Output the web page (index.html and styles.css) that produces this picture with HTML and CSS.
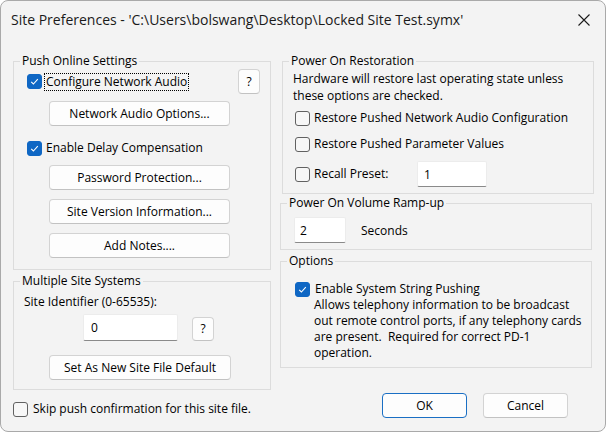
FILE: index.html
```html
<!DOCTYPE html>
<html lang="en">
<head>
    <meta charset="UTF-8">
    <meta name="viewport" content="width=device-width, initial-scale=1.0">
    <title>Site Preferences</title>
    <link rel="stylesheet" href="styles.css">
</head>
<body>

<div class="window">
    <div class="titlebar">
        <span class="title">Site Preferences - 'C:\Users\bolswang\Desktop\Locked Site Test.symx'</span>
        <svg class="close" width="12" height="12" viewBox="0 0 12 12">
            <path d="M0.5 0.5 L11.5 11.5 M11.5 0.5 L0.5 11.5" stroke="#1b1b1b" stroke-width="1.1" fill="none"/>
        </svg>
    </div>

    <div class="content">
        <div class="col left">
            <fieldset class="group push">
                <legend>Push Online Settings</legend>
                <div class="body">
                    <div class="row first">
                        <label class="check">
                            <span class="box checked"><svg width="13" height="13" viewBox="0 0 13 13"><path d="M3.2 6.8 L5.4 9 L9.8 4.2" stroke="#fff" stroke-width="1.1" fill="none"/></svg></span>
                            <span class="focused">Configure Network Audio</span>
                        </label>
                        <button class="btn help">?</button>
                    </div>
                    <button class="btn wide net-opts">Network Audio Options...</button>
                    <label class="check delay">
                        <span class="box checked"><svg width="13" height="13" viewBox="0 0 13 13"><path d="M3.2 6.8 L5.4 9 L9.8 4.2" stroke="#fff" stroke-width="1.1" fill="none"/></svg></span>
                        <span>Enable Delay Compensation</span>
                    </label>
                    <button class="btn wide pw">Password Protection...</button>
                    <button class="btn wide stacked">Site Version Information...</button>
                    <button class="btn wide stacked">Add Notes....</button>
                </div>
            </fieldset>

            <fieldset class="group multi">
                <legend>Multiple Site Systems</legend>
                <div class="body">
                    <div class="field-label">Site Identifier (0-65535):</div>
                    <div class="id-row">
                        <input class="text site-id" type="text" value="0">
                        <button class="btn help small">?</button>
                    </div>
                    <button class="btn set-default">Set As New Site File Default</button>
                </div>
            </fieldset>

            <label class="check skip">
                <span class="box"></span>
                <span>Skip push confirmation for this site file.</span>
            </label>
        </div>

        <div class="col right">
            <fieldset class="group restore">
                <legend>Power On Restoration</legend>
                <div class="body">
                    <p class="note">Hardware will restore last operating state unless<br>these options are checked.</p>
                    <label class="check r1"><span class="box"></span><span>Restore Pushed Network Audio Configuration</span></label>
                    <label class="check r2"><span class="box"></span><span>Restore Pushed Parameter Values</span></label>
                    <div class="preset-row">
                        <label class="check preset"><span class="box"></span><span>Recall Preset:</span></label>
                        <input class="text preset-num" type="text" value="1">
                    </div>
                </div>
            </fieldset>

            <fieldset class="group ramp">
                <legend>Power On Volume Ramp-up</legend>
                <div class="body">
                    <input class="text ramp-num" type="text" value="2">
                    <span class="unit">Seconds</span>
                </div>
            </fieldset>

            <fieldset class="group options">
                <legend>Options</legend>
                <div class="body">
                    <label class="check"><span class="box checked"><svg width="13" height="13" viewBox="0 0 13 13"><path d="M3.2 6.8 L5.4 9 L9.8 4.2" stroke="#fff" stroke-width="1.1" fill="none"/></svg></span><span>Enable System String Pushing</span></label>
                    <p class="desc">Allows telephony information to be broadcast<br>out remote control ports, if any telephony cards<br>are present.&nbsp; Required for correct PD-1<br>operation.</p>
                </div>
            </fieldset>

            <div class="actions">
                <button class="btn action default">OK</button>
                <button class="btn action">Cancel</button>
            </div>
        </div>
    </div>
</div>

</body>
</html>
```

FILE: styles.css
```css
body {
    margin: 0;
    background-color: #fff;
    font-family: "Segoe UI", "Open Sans", sans-serif;
    font-size: 12px;
    color: #000;
}
.window {
    box-sizing: border-box;
    width: 606px;
    height: 432px;
    border: 1px solid #a9a9a9;
    border-radius: 8px;
    background-color: #f3f3f3;
    overflow: hidden;
}
.titlebar {
    height: 40px;
    box-sizing: border-box;
    display: flex;
    align-items: center;
    justify-content: space-between;
    padding: 0 15px 3px 10px;
}
.title {
    font-size: 14px;
    color: #1a1a1a;
}
.content {
    display: flex;
    gap: 9px;
    padding: 12px 0 0 12px;
}
.col {
    display: flex;
    flex-direction: column;
}
.left {
    width: 258px;
}
.right {
    width: 314px;
}

/* group boxes */
.group {
    margin: 0;
    padding: 0;
    min-width: 0;
    border: 1px solid #dcdcdc;
}
.group legend {
    margin-left: 6px;
    padding: 0 2px;
    line-height: 16px;
}
.group .body {
    display: flex;
    flex-direction: column;
    align-items: flex-start;
}

/* buttons */
.btn {
    box-sizing: border-box;
    font: inherit;
    color: #000;
    background-color: #fdfdfd;
    border: 1px solid #d3d3d3;
    border-bottom-color: #c2c2c2;
    border-radius: 4px;
    padding: 0;
    height: 25px;
    line-height: 22px;
    text-align: center;
}
.btn.wide {
    width: 181px;
    margin-left: 22px;
}
.btn.help {
    width: 22px;
}
.btn.help.small {
    height: 24px;
    width: 22px;
    margin-left: 14px;
}
.btn.default {
    border-color: #1a6fc4;
}

/* checkboxes */
.check {
    display: flex;
    align-items: center;
    gap: 4px;
    height: 16px;
    line-height: 16px;
    white-space: nowrap;
}
.box {
    box-sizing: border-box;
    width: 15px;
    height: 15px;
    flex: none;
    border: 1px solid #616161;
    border-radius: 3px;
    background-color: #f7f7f7;
    display: flex;
    align-items: center;
    justify-content: center;
}
.box.checked {
    background-color: #0f67c4;
    border-color: #0f67c4;
}
.focused {
    outline: 1px dotted #000;
    padding: 0 1px;
    margin-left: -1px;
}

/* text fields */
.text {
    box-sizing: border-box;
    font: inherit;
    color: #000;
    background-color: #fff;
    border: 1px solid #ececec;
    border-bottom-color: #8a8a8a;
    border-radius: 2px;
    padding: 0 6px;
    outline: none;
}

/* push online settings */
.push .body {
    padding: 0 10px 11px 13px;
}
.push .row {
    display: flex;
    align-items: center;
    align-self: stretch;
    justify-content: space-between;
    height: 25px;
}
.net-opts {
    margin-top: 7px;
}
.delay {
    margin-top: 14px;
}
.pw {
    margin-top: 9px;
}
.stacked {
    margin-top: 9px;
}

/* multiple site systems */
.multi {
    margin-top: 3px;
}
.multi .body {
    padding: 5px 0 9px 10px;
}
.field-label {
    line-height: 16px;
}
.id-row {
    display: flex;
    align-items: flex-end;
    margin-top: 4px;
    margin-left: 59px;
}
.site-id {
    width: 95px;
    height: 27px;
    padding-left: 7px;
}
.btn.set-default {
    width: 182px;
    margin-top: 14px;
    margin-left: 25px;
}
.skip {
    margin-top: 11px;
    gap: 5px;
}

/* power on restoration */
.restore {
    margin-left: 2px;
}
.restore .body {
    padding: 1px 0 6px 10px;
}
.note {
    margin: 0;
    line-height: 17px;
}
.r1 {
    margin-top: 6px;
    margin-left: 2px;
}
.r2 {
    margin-top: 10px;
    margin-left: 2px;
}
.preset-row {
    display: flex;
    align-items: center;
    margin-top: 9px;
    margin-left: 2px;
}
.preset {
    width: 122px;
}
.preset-num {
    width: 70px;
    height: 26px;
}

/* volume ramp */
.ramp {
    margin-top: 1px;
    margin-right: 2px;
}
.ramp .body {
    flex-direction: row;
    align-items: center;
    padding: 6px 0 6px 13px;
}
.ramp-num {
    width: 52px;
    height: 26px;
    padding-left: 5px;
}
.unit {
    margin-left: 15px;
}

/* options */
.options {
    margin-top: 3px;
    margin-right: 2px;
}
.options .body {
    padding: 12px 0 6px 14px;
}
.options .check {
    gap: 5px;
}
.desc {
    margin: 0 0 0 19px;
    line-height: 16px;
}

.actions {
    display: flex;
    justify-content: flex-end;
    gap: 16px;
    margin-top: 25px;
    padding-right: 26px;
}
.btn.action {
    width: 85px;
}
```
